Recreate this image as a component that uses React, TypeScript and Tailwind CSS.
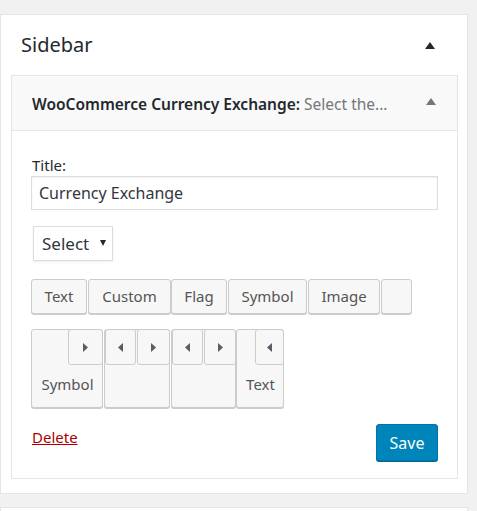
import React from "react";

const font = { fontFamily: '"Noto Sans", "Liberation Sans", sans-serif' };

function Tri({ dir, className = "" }: { dir: "up" | "down" | "left" | "right"; className?: string }) {
  if (dir === "up")
    return (
      <svg width="10" height="7" viewBox="0 0 10 7" className={className}>
        <path d="M5 0 L10 7 L0 7 Z" fill="currentColor" />
      </svg>
    );
  if (dir === "down")
    return (
      <svg width="6" height="6" viewBox="0 0 6 6" className={className}>
        <path d="M0 0 L6 0 L3 6 Z" fill="currentColor" />
      </svg>
    );
  if (dir === "left")
    return (
      <svg width="5" height="9" viewBox="0 0 5 9" className={className}>
        <path d="M5 0 L5 9 L0 4.5 Z" fill="currentColor" />
      </svg>
    );
  return (
    <svg width="5" height="9" viewBox="0 0 5 9" className={className}>
      <path d="M0 0 L5 4.5 L0 9 Z" fill="currentColor" />
    </svg>
  );
}

const btn =
  "h-[35px] rounded-[3px] border border-[#ccc] bg-[#f7f7f7] shadow-[0_1px_0_#ccc] text-[15px] text-[#555] flex items-center justify-center";

const small =
  "h-[36px] rounded-[3px] border border-[#ccc] bg-[#f7f7f7] flex items-center justify-center text-[#555d66]";

// the small move buttons inside the bottom row; null = empty slot
type Block = { w: string; arrows: ("left" | "right" | null)[]; widths: string[]; label: string };

const blocks: Block[] = [
  { w: "w-[72px] mr-[1px]", arrows: [null, "right"], widths: ["w-[36px]", "w-[36px]"], label: "Symbol" },
  { w: "w-[66px] mr-[1px]", arrows: ["left", "right"], widths: ["w-[32px]", "w-[34px]"], label: "" },
  { w: "w-[65px]", arrows: ["left", "right"], widths: ["w-[32px]", "w-[33px]"], label: "" },
  { w: "w-[48px]", arrows: ["left"], widths: ["w-[29px]"], label: "Text" },
];

export default function App() {
  return (
    <div className="w-[477px] h-[511px] overflow-hidden bg-[#f1f1f1] pt-[14px]" style={font}>
      <div className="w-[468px] h-[480px] border border-[#e5e5e5] bg-white">
        <div className="h-[60px] flex items-center justify-between pl-[20px] pr-[32px]">
          <h2 className="text-[20px] text-[#23282d]">Sidebar</h2>
          <Tri dir="up" className="text-[#23282d]" />
        </div>

        <div className="ml-[10px] w-[447px] h-[404px] border border-[#e5e5e5] bg-white">
          <div className="h-[55px] bg-[#f9f9f9] border-b border-[#e5e5e5] flex items-center justify-between pl-[20px] pr-[21px]">
            <h3 className="text-[15.5px] font-semibold text-[#23282d] whitespace-nowrap pt-[3px]">
              WooCommerce Currency Exchange:<span className="font-normal text-[#72777c]"> Select the...</span>
            </h3>
            <Tri dir="up" className="text-[#72777c] mt-[-3px]" />
          </div>

          <div className="px-[19px] pt-[24px]">
            <label className="block text-[15px] leading-[21px] text-[#23282d] pl-[1px]">Title:</label>
            <input
              readOnly
              value="Currency Exchange"
              className="block w-[407px] h-[34px] border border-[#ddd] shadow-[inset_0_1px_2px_rgba(0,0,0,0.07)] px-[7px] text-[16px] text-[#32373c] outline-none"
              style={font}
            />

            <div className="mt-[16px] ml-[2px] w-[80px] h-[35px] border border-[#ddd] shadow-[0_1px_2px_rgba(0,0,0,0.07)] flex items-center pl-[8px] gap-[11px] text-[17px] text-[#32373c]">
              <span>Select</span>
              <Tri dir="down" className="text-[#23282d] mt-[-2px]" />
            </div>

            <div className="mt-[18px] flex">
              <div className={`${btn} w-[56px] mr-[1px]`}>Text</div>
              <div className={`${btn} w-[83px]`}>Custom</div>
              <div className={`${btn} w-[56px] mr-[1px]`}>Flag</div>
              <div className={`${btn} w-[79px] mr-[1px]`}>Symbol</div>
              <div className={`${btn} w-[72px] mr-[1px]`}>Image</div>
              <div className={`${btn} w-[31px]`}></div>
            </div>

            <div className="mt-[15px] flex">
              {blocks.map((b, i) => (
                <div
                  key={i}
                  className={`${b.w} h-[79px] rounded-[3px] border border-[#ccc] bg-[#f7f7f7] shadow-[0_1px_0_#ccc] flex flex-col`}
                >
                  <div className="flex justify-end gap-[1px] mt-[-1px] mr-[-1px]">
                    {b.arrows.map((a, j) =>
                      a ? (
                        <div key={j} className={`${small} ${b.widths[j]}`}>
                          <Tri dir={a} />
                        </div>
                      ) : (
                        <div key={j} className={b.widths[j]}></div>
                      )
                    )}
                  </div>
                  <div className="flex-1 flex items-center justify-center pl-[1px] text-[15px] text-[#555] pb-[4px]">
                    {b.label}
                  </div>
                </div>
              ))}
            </div>

            <div className="mt-[16px] flex justify-between items-start">
              <a className="text-[15px] text-[#a00] underline mt-[2px] pl-[1px]">Delete</a>
              <button className="w-[62px] h-[37px] rounded-[3px] bg-[#0085ba] border border-[#0073aa] shadow-[0_1px_0_#006799] text-white text-[16px]">
                Save
              </button>
            </div>
          </div>
        </div>
      </div>
      <div className="mt-[13px] w-[468px] h-[40px] border border-[#e5e5e5] bg-white"></div>
    </div>
  );
}
